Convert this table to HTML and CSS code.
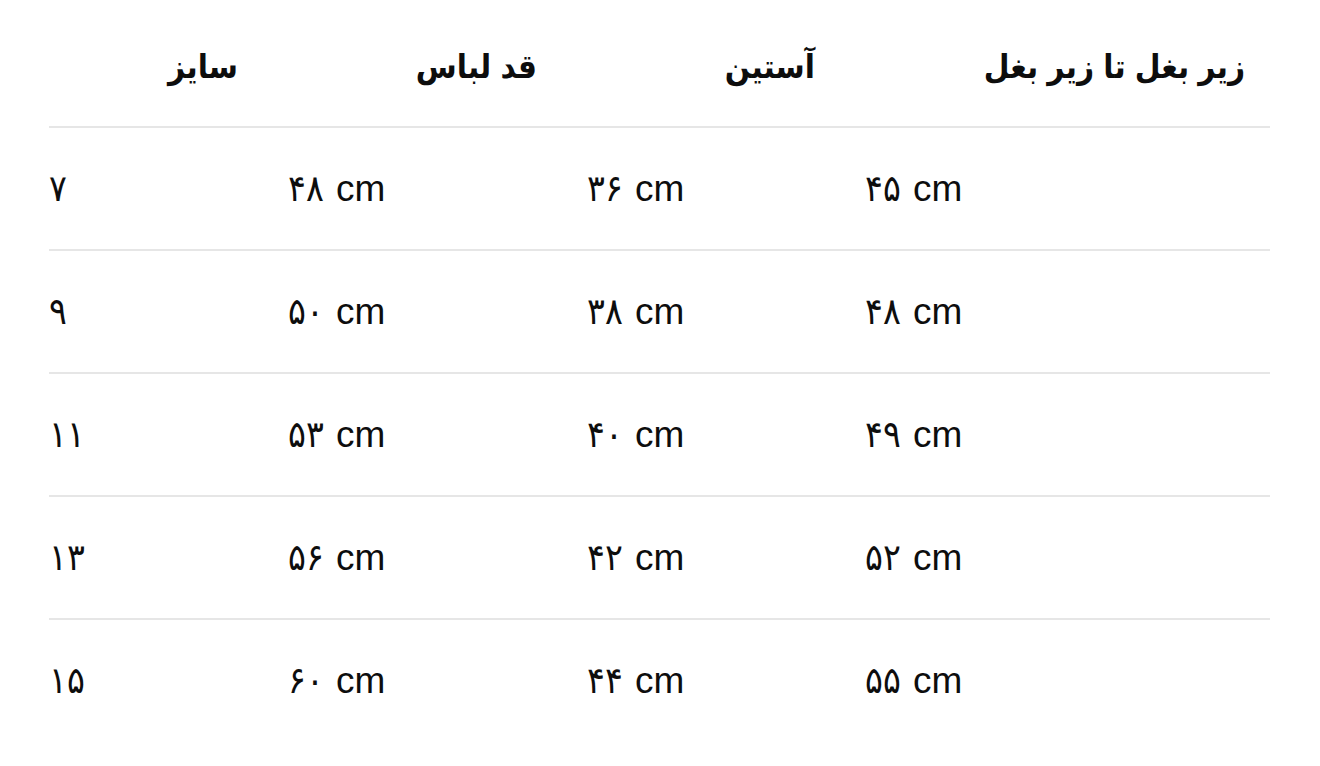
FILE: index.html
```html
<!DOCTYPE html>
<html lang="fa">
<head>
<meta charset="utf-8">
<title>جدول سایز</title>
<link rel="stylesheet" href="styles.css">
</head>
<body>
<div class="page">
  <table class="sizes">
    <colgroup>
      <col class="c1"><col class="c2"><col class="c3"><col class="c4">
    </colgroup>
    <thead>
      <tr>
        <th>سایز</th>
        <th>قد لباس</th>
        <th>آستین</th>
        <th>زیر بغل تا زیر بغل</th>
      </tr>
    </thead>
    <tbody>
      <tr><td>۷</td><td>۴۸ cm</td><td>۳۶ cm</td><td>۴۵ cm</td></tr>
      <tr><td>۹</td><td>۵۰ cm</td><td>۳۸ cm</td><td>۴۸ cm</td></tr>
      <tr><td>۱۱</td><td>۵۳ cm</td><td>۴۰ cm</td><td>۴۹ cm</td></tr>
      <tr><td>۱۳</td><td>۵۶ cm</td><td>۴۲ cm</td><td>۵۲ cm</td></tr>
      <tr><td>۱۵</td><td>۶۰ cm</td><td>۴۴ cm</td><td>۵۵ cm</td></tr>
    </tbody>
  </table>
</div>
</body>
</html>
```

FILE: styles.css
```css
html, body {
  margin: 0;
  padding: 0;
  background: #ffffff;
}

.page {
  padding: 8px 50px 0 49px;
  font-family: "Liberation Sans", "DejaVu Sans Condensed", "DejaVu Sans", sans-serif;
  color: #0d0d0d;
}

.sizes {
  width: 1221px;
  border-collapse: collapse;
  table-layout: fixed;
}

.c1 { width: 214px; }
.c2 { width: 299px; }
.c3 { width: 278px; }
.c4 { width: 430px; }

.sizes th,
.sizes td {
  padding: 0 25px;
  line-height: 40px;
  vertical-align: middle;
}

.sizes th:first-child,
.sizes td:first-child {
  padding-left: 0;
}

.sizes th {
  height: 118px;
  font-size: 33px;
  text-align: right;
  direction: rtl;
  font-weight: bold;
  border-bottom: 2px solid #e6e6e6;
}

.sizes td {
  height: 121px;
  font-size: 37px;
  word-spacing: 2px;
  text-align: left;
  direction: ltr;
  font-weight: normal;
  border-bottom: 2px solid #e6e6e6;
}

.sizes tbody tr:last-child td {
  border-bottom: none;
}
```
